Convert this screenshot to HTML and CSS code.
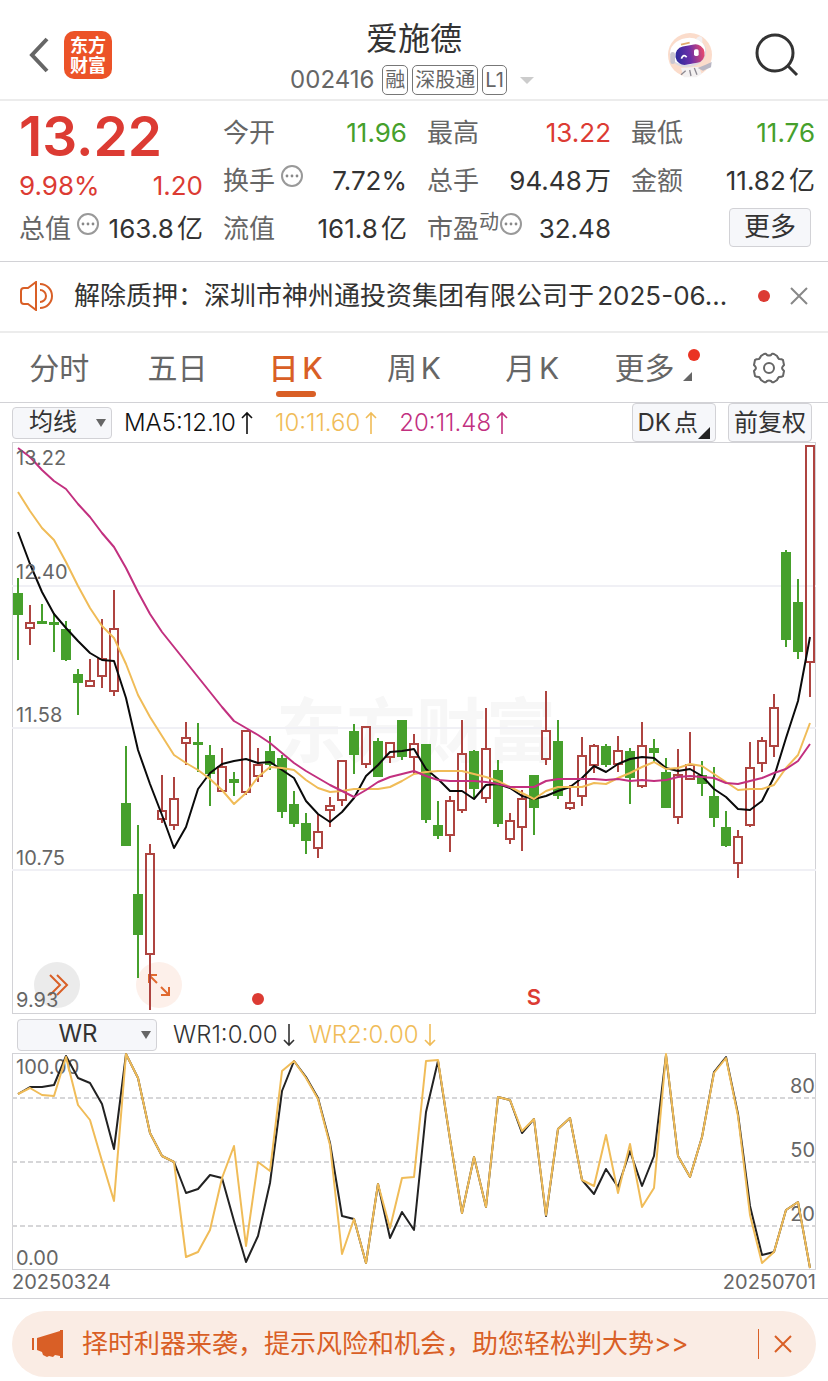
FILE: index.html
```html
<!DOCTYPE html>
<html lang="zh-CN">
  <head>
    <meta charset="UTF-8" />
    <meta name="viewport" content="width=device-width, initial-scale=1.0" />
    <title>爱施德 002416</title>
    <link rel="stylesheet" href="styles.css">
  </head>
  <body>
    <header class="topbar">
      <div class="topbar-left">
        <button class="icon-btn" aria-label="返回">
          <svg width="20" height="36" viewBox="0 0 20 36" fill="none" stroke="#666" stroke-width="4">
            <path d="M18 2 L3 18 L18 34" />
          </svg>
        </button>
        <a class="logo" href="#">东方<br>财富</a>
      </div>
      <div class="topbar-title">
        <h1>爱施德</h1>
        <div class="code">
          <span class="code-num">002416</span>
          <span class="tag">融</span>
          <span class="tag">深股通</span>
          <span class="tag">L1</span>
          <span class="caret"></span>
        </div>
      </div>
      <div class="topbar-right">
        <button class="icon-btn" aria-label="智能助手">
          <svg width="46" height="46" viewBox="0 0 138 138">
            <defs>
              <linearGradient id="visor">
                <stop offset="0" stop-color="#2b2a9c" />
                <stop offset="0.5" stop-color="#6a2fa8" />
                <stop offset="1" stop-color="#ea4a6c" />
              </linearGradient>
            </defs>
            <circle cx="69" cy="69" r="66" fill="#fbdccb" />
            <path d="M42 108 L96 104 L104 126 L88 136 H50 Z" fill="#f4f1f1" />
            <path d="M56 116 L42 128 M68 114 L72 132 M82 108 L90 128" stroke="#8d8a92" stroke-width="4" />
            <path d="M92 108 L116 98 L134 90 L132 106 L108 116 Z" fill="#b9b7c4" />
            <path d="M86 22 Q98 6 106 18 L106 40 Z" fill="#f3f0f2" />
            <ellipse cx="63" cy="62" rx="55" ry="43" fill="#dcd9e0" transform="rotate(-10 63 62)" />
            <ellipse cx="62" cy="58" rx="53" ry="40" fill="#fff" transform="rotate(-10 62 58)" />
            <path d="M42 38 L68 32" stroke="#e0ab6f" stroke-width="5" />
            <rect x="10" y="60" width="14" height="36" rx="7" fill="#c9c6d0" />
            <rect x="25" y="40" width="88" height="56" rx="27" fill="url(#visor)" transform="rotate(-10 69 68)" />
            <path d="M43 80 Q50 64 59 76" fill="none" stroke="#fff" stroke-width="5" />
            <rect x="81" y="52" width="14" height="20" rx="5" fill="#fff" />
          </svg>
        </button>
        <button class="icon-btn" aria-label="搜索">
          <svg width="44" height="44" viewBox="0 0 44 44" fill="none" stroke="#333">
            <circle cx="20" cy="20" r="18" stroke-width="3" />
            <path d="M32 32 L42 42" stroke-width="3" />
          </svg>
        </button>
      </div>
    </header>

    <svg class="defs" aria-hidden="true">
      <symbol id="info" viewBox="0 0 22 22">
        <circle cx="11" cy="11" r="10" fill="none" stroke="#999" stroke-width="2" />
        <circle cx="6" cy="11" r="1.4" fill="#888" />
        <circle cx="11" cy="11" r="1.4" fill="#888" />
        <circle cx="16" cy="11" r="1.4" fill="#888" />
      </symbol>
      <symbol id="up" viewBox="0 0 12 24">
        <path d="M6 23 V2 M1 7 L6 2 L11 7" fill="none" stroke="currentColor" stroke-width="1.6" />
      </symbol>
      <symbol id="down" viewBox="0 0 12 24">
        <path d="M6 1 V22 M1 17 L6 22 L11 17" fill="none" stroke="currentColor" stroke-width="1.6" />
      </symbol>
    </svg>

    <section class="quote">
      <div class="quote-col main">
        <div class="price">13.22</div>
        <div class="row change"><span>9.98%</span><span>1.20</span></div>
        <div class="row"><span class="label">总值<svg class="info"><use href="#info" /></svg></span><span>163.8亿</span></div>
      </div>
      <div class="quote-col">
        <div class="row"><span class="label">今开</span><span class="green">11.96</span></div>
        <div class="row"><span class="label">换手<svg class="info"><use href="#info" /></svg></span><span>7.72%</span></div>
        <div class="row"><span class="label">流值</span><span>161.8亿</span></div>
      </div>
      <div class="quote-col">
        <div class="row"><span class="label">最高</span><span class="red">13.22</span></div>
        <div class="row"><span class="label">总手</span><span>94.48万</span></div>
        <div class="row"><span class="label">市盈<small>动</small><svg class="info tight"><use href="#info" /></svg></span><span>32.48</span></div>
      </div>
      <div class="quote-col">
        <div class="row"><span class="label">最低</span><span class="green">11.76</span></div>
        <div class="row"><span class="label">金额</span><span>11.82亿</span></div>
        <div class="row end"><button class="more">更多</button></div>
      </div>
    </section>

    <section class="notice">
      <svg width="36" height="30" viewBox="0 0 36 30" fill="none" stroke="#d95f26" stroke-width="2">
        <path d="M17 1 V29 L9 23 H5 Q2 23 2 20 V10 Q2 7 5 7 H9 Z" />
        <path d="M21 3 A12 12 0 0 1 21 27 M21 9 A6 6 0 0 1 21 21" />
      </svg>
      <a class="notice-text" href="#">解除质押：深圳市神州通投资集团有限公司于2025-06...</a>
      <span class="dot"></span>
      <button class="icon-btn" aria-label="关闭公告">
        <svg width="18" height="18" viewBox="0 0 18 18" stroke="#888" stroke-width="2">
          <path d="M1 1 L17 17 M17 1 L1 17" />
        </svg>
      </button>
    </section>

    <nav class="tabs">
      <button>分时</button>
      <button>五日</button>
      <button class="active">日K</button>
      <button>周K</button>
      <button>月K</button>
      <button class="tab-more">更多</button>
      <button aria-label="设置">
        <svg width="34" height="32" viewBox="0 0 34 32" fill="none" stroke="#666" stroke-width="2">
          <circle cx="17" cy="16" r="5" />
          <path d="M12 2 Q14 1 15 3 Q17 4 19 3 Q20 1 22 2 L25 4 Q26 6 27 7 Q30 7 31 8 L32 13 Q30 15 30 16 Q30 17 32 19 L31 24 Q30 25 27 25 Q26 26 25 28 L22 30 Q20 31 19 29 Q17 28 15 29 Q14 31 12 30 L9 28 Q8 26 7 25 Q4 25 3 24 L2 19 Q4 17 4 16 Q4 15 2 13 L3 8 Q4 7 7 7 Q8 6 9 4 Z" />
        </svg>
      </button>
    </nav>

    <main>
      <div class="toolbar">
        <span class="picker">
          <select aria-label="主图指标"><option>均线</option></select>
        </span>
        <span class="ind black">MA5:12.10<svg><use href="#up" /></svg></span>
        <span class="ind yellow">10:11.60<svg><use href="#up" /></svg></span>
        <span class="ind pink">20:11.48<svg><use href="#up" /></svg></span>
        <button class="tool dk">DK点</button>
        <button class="tool">前复权</button>
      </div>

      <div class="chart">
        <button class="round next" aria-label="下一只">
          <svg width="20" height="22" viewBox="0 0 20 22" fill="none" stroke="#d95f26" stroke-width="2">
            <path d="M1 1 L11 11 L1 21 M8 1 L18 11 L8 21" />
          </svg>
        </button>
        <button class="round expand" aria-label="全屏">
          <svg width="24" height="24" viewBox="0 0 24 24" fill="none" stroke="#e0692f" stroke-width="2">
            <path d="M2 10 V2 H10 M2 2 L10 10 M22 14 V22 H14 M22 22 L14 14" />
          </svg>
        </button>
        <svg id="kline" viewBox="12 442 804 572">
          <text class="watermark" x="276" y="757">东方财富</text>
          <path class="grid" d="M12 586 H816 M12 728 H816 M12 870 H816" />
          <g id="candles"></g>
          <g id="averages"></g>
          <circle cx="258" cy="999" r="6" fill="#dc3b33" />
          <text class="mark" x="534" y="1005">S</text>
          <g class="axis">
            <text x="16" y="465">13.22</text>
            <text x="16" y="579">12.40</text>
            <text x="16" y="722">11.58</text>
            <text x="16" y="865">10.75</text>
            <text x="16" y="1007">9.93</text>
          </g>
        </svg>
      </div>

      <div class="toolbar sub">
        <span class="picker wide">
          <select aria-label="副图指标"><option>WR</option></select>
        </span>
        <span class="ind">WR1:0.00<svg><use href="#down" /></svg></span>
        <span class="ind yellow">WR2:0.00<svg><use href="#down" /></svg></span>
      </div>

      <div class="chart">
        <svg id="wr" viewBox="12 1053 804 217">
          <path class="grid dashed" d="M12 1098 H816 M12 1162 H816 M12 1226 H816" />
          <g class="axis">
            <text x="16" y="1074">100.00</text>
            <text x="16" y="1265">0.00</text>
            <text class="right" x="815" y="1093">80</text>
            <text class="right" x="815" y="1157">50</text>
            <text class="right" x="815" y="1221">20</text>
          </g>
          <g id="wr-lines"></g>
        </svg>
      </div>
      <div class="dates"><span>20250324</span><span>20250701</span></div>
    </main>

    <footer>
      <div class="promo">
        <svg width="32" height="28" viewBox="0 0 32 28" fill="#d95f26">
          <path d="M0 8 H2 V20 H0 Z M5 8 L28 1 V0 H31 V28 H28 V26 L23 25 L21 27 L17 26 L15 27 L11 25 L10 22 L5 20 Z" />
        </svg>
        <a class="promo-text" href="#">择时利器来袭，提示风险和机会，助您轻松判大势&gt;&gt;</a>
        <button class="promo-close" aria-label="关闭">
          <svg width="18" height="18" viewBox="0 0 18 18" stroke="#d95f26" stroke-width="2">
            <path d="M1 1 L17 17 M17 1 L1 17" />
          </svg>
        </button>
      </div>
    </footer>

    <script src="chart.js"></script>
  </body>
</html>
```
FILE: styles.css
```css
:root {
  --red: #dc3b33;
  --green: #46a02c;
  --orange: #d95f26;
  --yellow: #f0bc58;
  --pink: #c2307f;
  --line: #d2d2d6;
  --panel: #f6f7fa;
}

* {
  box-sizing: border-box;
}

body {
  margin: 0;
  background: #fff;
  color: #333;
  font-family: Inter, "Noto Sans CJK SC", sans-serif;
  font-size: 26px;
  line-height: 1.2;
  text-autospace: normal;
}

button,
select {
  font: inherit;
  color: inherit;
  margin: 0;
  padding: 0;
  border: 0;
  background: none;
}

a {
  color: inherit;
  text-decoration: none;
}

svg {
  display: block;
  flex: none;
}

.defs {
  position: absolute;
  width: 0;
  height: 0;
}

.red {
  color: var(--red);
}
.green {
  color: var(--green);
}
.yellow {
  color: var(--yellow);
}
.pink {
  color: var(--pink);
}
.black {
  color: #111;
}

/* top bar */
.topbar {
  display: grid;
  grid-template-columns: 1fr auto 1fr;
  height: 101px;
  padding: 10px 29px 0;
  border-bottom: 2px solid #ececec;
}
.topbar-left,
.topbar-right {
  display: flex;
  align-items: center;
}
.topbar-left {
  gap: 15px;
}
.topbar-right {
  justify-content: flex-end;
  gap: 42px;
}
.logo {
  width: 48px;
  height: 48px;
  padding-top: 5px;
  border-radius: 10px;
  background: #ec5328;
  color: #fff;
  font-size: 18px;
  font-weight: 700;
  line-height: 20px;
  text-align: center;
}
.topbar-title {
  padding-right: 4px;
  text-align: center;
}
h1 {
  margin: 8px 0 5px 4px;
  font-size: 32px;
  font-weight: 400;
  line-height: 42px;
}
.code {
  display: flex;
  align-items: center;
  gap: 4px;
  color: #666;
}
.code-num {
  margin-right: 4px;
  font-size: 24px;
}
.tag {
  padding: 0 2px;
  border: 1px solid #777;
  border-radius: 5px;
  font-size: 20px;
  line-height: 28px;
}
.caret {
  margin-left: 9px;
  border: 7px solid transparent;
  border-top-color: #ccc;
  border-bottom: 0;
}

/* quote grid */
.quote {
  display: grid;
  grid-template-columns: repeat(4, 1fr);
  gap: 20px;
  padding: 8px 13px 8px 19px;
  border-bottom: 1px solid var(--line);
}
.row {
  display: flex;
  align-items: center;
  justify-content: space-between;
  height: 48px;
  white-space: nowrap;
}
.row.end {
  justify-content: flex-end;
  padding: 0 4px 4px 0;
}
.price {
  color: var(--red);
  font-size: 55px;
  font-weight: 600;
  line-height: 54px;
}
.main .row {
  height: 40px;
}
.main .change {
  height: 46px;
  color: var(--red);
}
.label {
  display: flex;
  align-items: center;
  color: #666;
}
.label small {
  margin-bottom: 14px;
  font-size: 20px;
}
.info {
  width: 22px;
  height: 22px;
  margin: 0 0 10px 6px;
}
.info.tight {
  margin-left: 1px;
}
.more {
  width: 82px;
  height: 39px;
  border: 1px solid var(--line);
  border-radius: 4px;
  background: var(--panel);
}

/* announcement */
.notice {
  display: flex;
  align-items: center;
  height: 71px;
  padding: 0 20px 1px 19px;
  border-bottom: 2px solid #ececec;
}
.notice-text {
  flex: 1;
  min-width: 0;
  margin-left: 19px;
  overflow: hidden;
  text-overflow: ellipsis;
  white-space: nowrap;
}
.dot {
  width: 12px;
  height: 12px;
  margin: 0 20px;
  border-radius: 50%;
  background: var(--red);
}

/* tabs */
.tabs {
  display: grid;
  grid-template-columns: repeat(7, 1fr);
  height: 70px;
  border-bottom: 1px solid var(--line);
}
.tabs button {
  position: relative;
  display: flex;
  align-items: center;
  justify-content: center;
  color: #666;
  font-size: 30px;
}
.tabs .active {
  color: var(--orange);
  font-weight: 500;
}
.tabs .active::after {
  content: "";
  position: absolute;
  bottom: 5px;
  width: 40px;
  height: 6px;
  border-radius: 3px;
  background: var(--orange);
}
.tabs .tab-more {
  padding-right: 12px;
}
.tab-more::before {
  content: "";
  position: absolute;
  top: 16px;
  right: 10px;
  width: 12px;
  height: 12px;
  border-radius: 50%;
  background: #ea3323;
}
.tab-more::after {
  content: "";
  position: absolute;
  right: 18px;
  bottom: 21px;
  border-bottom: 9px solid #666;
  border-left: 9px solid transparent;
}

/* charts */
main {
  padding: 0 12px;
  border-bottom: 1px solid var(--line);
}
.toolbar {
  display: flex;
  align-items: center;
  height: 39px;
  font-size: 24px;
  white-space: nowrap;
}
.toolbar.sub {
  padding-top: 2px;
}
.picker {
  position: relative;
  width: 100px;
  margin-right: 12px;
}
.picker select {
  display: block;
  width: 100%;
  height: 32px;
  padding-right: 18px;
  border: 1px solid var(--line);
  border-radius: 4px;
  background: var(--panel);
  appearance: none;
  text-align: center;
  text-align-last: center;
}
.picker::after {
  content: "";
  position: absolute;
  top: 12px;
  right: 6px;
  border: 5px solid transparent;
  border-top: 8px solid #666;
  border-bottom: 0;
  pointer-events: none;
}
.picker.wide {
  width: 140px;
  margin: 0 16px 0 5px;
}
.ind {
  display: flex;
  align-items: center;
  gap: 5px;
  margin-right: 22px;
  padding-top: 2px;
  font-weight: 300;
}
.ind svg {
  width: 12px;
  height: 24px;
}
.sub .ind {
  margin-right: 14px;
}
.tool {
  height: 39px;
  padding: 2px 5px 0;
  border: 1px solid var(--line);
  border-radius: 4px;
  background: var(--panel);
}
.tool + .tool {
  margin: 0 4px 0 12px;
}
.dk {
  position: relative;
  margin-left: auto;
  padding-right: 17px;
}
.dk::after {
  content: "";
  position: absolute;
  right: 5px;
  bottom: 2px;
  border-bottom: 12px solid #222;
  border-left: 12px solid transparent;
}
.chart {
  position: relative;
  outline: 1px solid var(--line);
  outline-offset: -1px;
}
.chart > svg {
  position: relative;
  width: 100%;
  height: auto;
  pointer-events: none;
}
.round {
  position: absolute;
  bottom: 6px;
  display: flex;
  align-items: center;
  justify-content: center;
  width: 46px;
  height: 46px;
  border-radius: 50%;
}
.next {
  left: 22px;
  padding-left: 4px;
  background: #ebebeb;
}
.expand {
  left: 124px;
  background: #fdf0ea;
}
.watermark {
  fill: #f7f7f7;
  font-size: 70px;
  font-weight: 700;
}
.grid {
  stroke: #f0f0f5;
  stroke-width: 2;
}
.dashed {
  stroke: #d6d6d8;
  stroke-dasharray: 5 3;
}
.axis {
  fill: #666;
  font-size: 20px;
}
.axis .right {
  text-anchor: end;
}
.mark {
  fill: var(--red);
  font-size: 22px;
  font-weight: 600;
  text-anchor: middle;
}
.line {
  fill: none;
  stroke-width: 2;
  stroke-linejoin: round;
}
.up {
  fill: none;
  stroke: #ae4440;
  stroke-width: 2;
}
.down {
  fill: var(--green);
  stroke: var(--green);
  stroke-width: 2;
}
.dates {
  display: flex;
  justify-content: space-between;
  color: #666;
  font-size: 20px;
  line-height: 24px;
  padding-bottom: 4px;
}

/* promo strip */
footer {
  padding: 12px;
}
.promo {
  display: flex;
  align-items: center;
  height: 66px;
  padding: 0 24px 0 20px;
  border-radius: 33px;
  background: #faece4;
  color: var(--orange);
}
.promo-text {
  flex: 1;
  margin-left: 18px;
  white-space: nowrap;
}
.promo-close {
  height: 30px;
  padding-left: 15px;
  border-left: 1px solid var(--orange);
}
```
FILE: chart.js
```js
const SVG = "http://www.w3.org/2000/svg";
const STEP = 12;
const START = 18;

// [direction, high, body top, body bottom, low]
const candles = [
  ["d", 578, 594, 614, 660], ["u", 605, 623, 628, 645], ["d", 604, 622, 623, 624],
  ["d", 613, 623, 624, 652], ["d", 621, 630, 659, 661], ["d", 669, 675, 682, 715],
  ["u", 659, 681, 686, 687], ["u", 619, 659, 676, 688], ["u", 590, 629, 691, 696],
  ["d", 746, 804, 845, 846], ["d", 825, 895, 934, 978], ["u", 844, 854, 954, 1010],
  ["u", 775, 811, 819, 823], ["u", 777, 799, 825, 830], ["u", 722, 738, 743, 765],
  ["d", 723, 743, 744, 772], ["d", 745, 756, 773, 806], ["u", 748, 767, 791, 792],
  ["d", 772, 780, 782, 796], ["u", 731, 731, 792, 795], ["u", 748, 765, 776, 782],
  ["d", 736, 752, 764, 770], ["d", 755, 759, 811, 818], ["d", 791, 805, 823, 827],
  ["d", 813, 824, 840, 854], ["u", 814, 832, 848, 858], ["u", 797, 806, 810, 827],
  ["u", 760, 761, 800, 806], ["d", 724, 732, 754, 774], ["u", 726, 727, 764, 768],
  ["d", 738, 742, 776, 777], ["u", 742, 743, 757, 763], ["d", 720, 721, 756, 760],
  ["u", 734, 744, 757, 774], ["d", 744, 745, 819, 823], ["d", 801, 826, 835, 839],
  ["u", 796, 801, 835, 852], ["u", 720, 754, 810, 813], ["d", 750, 752, 788, 798],
  ["u", 708, 749, 798, 803], ["d", 760, 771, 823, 827], ["u", 813, 821, 839, 844],
  ["u", 790, 799, 827, 851], ["d", 775, 776, 807, 835], ["u", 691, 731, 759, 765],
  ["d", 720, 742, 795, 799], ["u", 785, 803, 808, 810], ["u", 737, 756, 796, 806],
  ["u", 744, 746, 765, 773], ["d", 744, 747, 764, 767], ["u", 736, 751, 764, 772],
  ["d", 748, 752, 777, 804], ["u", 722, 746, 786, 788], ["d", 739, 749, 752, 763],
  ["d", 758, 773, 807, 808], ["u", 749, 775, 817, 824], ["u", 732, 765, 779, 780],
  ["d", 761, 776, 783, 796], ["d", 767, 797, 817, 827], ["d", 811, 828, 845, 847],
  ["u", 830, 837, 863, 878], ["u", 742, 768, 825, 827], ["u", 737, 741, 763, 772],
  ["u", 694, 708, 746, 757], ["d", 550, 553, 639, 647], ["d", 579, 603, 651, 659],
  ["u", 446, 446, 662, 697],
];

const ma5 = [
  532, 564, 592, 614, 628, 641, 653, 660, 661, 698, 750, 784, 815, 848, 827, 789, 773,
  764, 761, 759, 763, 762, 770, 778, 801, 814, 822, 812, 798, 776, 765, 752, 751, 749,
  769, 779, 791, 791, 799, 785, 784, 788, 796, 799, 796, 791, 787, 778, 766, 772, 764,
  759, 757, 758, 768, 771, 769, 776, 789, 797, 809, 810, 801, 777, 738, 701, 637,
];
const ma10 = [
  492, 511, 528, 540, 562, 586, 608, 626, 638, 664, 695, 717, 736, 755, 763, 770, 779,
  790, 804, 793, 777, 767, 768, 770, 780, 788, 792, 791, 789, 789, 789, 787, 781, 774,
  772, 771, 771, 771, 774, 777, 781, 787, 793, 799, 791, 787, 787, 787, 783, 784, 778,
  773, 767, 762, 769, 768, 764, 766, 774, 782, 790, 789, 789, 785, 768, 755, 723,
];
const ma20 = [
  448, 457, 470, 481, 489, 504, 517, 533, 547, 568, 592, 614, 632, 647, 662, 677, 692,
  707, 721, 728, 735, 743, 753, 763, 771, 778, 785, 791, 797, 790, 782, 777, 774, 771,
  776, 780, 781, 781, 781, 782, 784, 787, 787, 787, 781, 779, 779, 779, 779, 780, 779,
  781, 780, 781, 780, 777, 776, 777, 778, 783, 784, 781, 778, 773, 769, 761, 744,
];

const wr1 = [
  1094, 1087, 1087, 1085, 1056, 1078, 1083, 1104, 1149, 1054, 1078, 1133, 1156, 1162,
  1193, 1189, 1175, 1178, 1221, 1262, 1236, 1183, 1091, 1061, 1077, 1098, 1143, 1216,
  1219, 1263, 1184, 1238, 1212, 1230, 1112, 1061, 1139, 1213, 1157, 1207, 1097, 1100,
  1133, 1119, 1216, 1129, 1118, 1180, 1194, 1169, 1187, 1151, 1186, 1156, 1055, 1156,
  1177, 1137, 1072, 1057, 1114, 1206, 1255, 1252, 1210, 1202, 1268,
];
const wr2 = [
  1094, 1088, 1095, 1096, 1057, 1105, 1120, 1161, 1201, 1054, 1078, 1133, 1156, 1162,
  1257, 1252, 1230, 1178, 1146, 1246, 1162, 1171, 1071, 1061, 1078, 1099, 1145, 1254,
  1219, 1263, 1184, 1228, 1178, 1177, 1061, 1060, 1139, 1213, 1157, 1207, 1097, 1100,
  1131, 1119, 1215, 1129, 1118, 1180, 1186, 1135, 1193, 1144, 1207, 1188, 1054, 1156,
  1177, 1137, 1073, 1058, 1116, 1215, 1263, 1252, 1210, 1202, 1268,
];

function add(parent, tag, attrs) {
  const el = document.createElementNS(SVG, tag);
  for (let [key, val] of Object.entries(attrs)) {
    el.setAttribute(key, val);
  }
  document.getElementById(parent).appendChild(el);
}

function drawLine(parent, values, color) {
  const points = values.map((y, i) => `${START + i * STEP},${y}`).join(" ");
  add(parent, "polyline", { class: "line", points, stroke: color });
}

candles.forEach(([dir, high, top, bottom, low], i) => {
  const x = START + i * STEP;
  // upper wick, lower wick, body
  add("candles", "path", {
    class: dir === "u" ? "up" : "down",
    d: `M${x} ${high} V${top} M${x} ${bottom} V${low} M${x - 4} ${top} H${x + 4} V${bottom} H${x - 4} Z`,
  });
});

drawLine("averages", ma5, "#0a0a0a");
drawLine("averages", ma10, "#f0bc58");
drawLine("averages", ma20, "#c2307f");
drawLine("wr-lines", wr1, "#222");
drawLine("wr-lines", wr2, "#f0bc58");
```
